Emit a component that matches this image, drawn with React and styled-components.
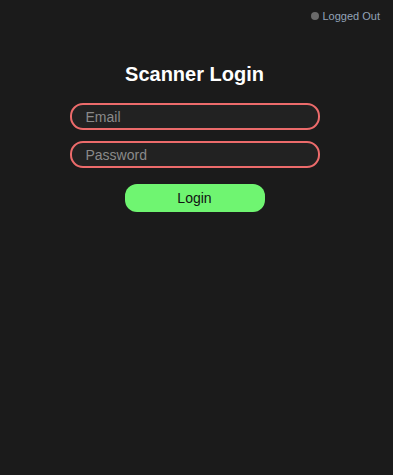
import styled, { createGlobalStyle } from "styled-components"

const Global = createGlobalStyle`
  html, body {
    margin: 0;
    padding: 0;
    background: #1b1b1b;
    font-family: "Liberation Sans", Arial, sans-serif;
  }
`

const Page = styled.div`
  width: 100vw;
  height: 100vh;
  background: #1b1b1b;
  display: flex;
  flex-direction: column;
`

const StatusBar = styled.div`
  display: flex;
  justify-content: flex-end;
  align-items: center;
  gap: 4px;
  padding: 10px 13px 0 0;
  font-size: 11px;
  color: #93a3b8;
`

const Dot = styled.span`
  width: 8px;
  height: 8px;
  border-radius: 50%;
  background: #6a6a6a;
`

const Form = styled.form`
  display: flex;
  flex-direction: column;
  align-items: center;
  margin-top: 41px;
  padding-right: 4px;
`

const Title = styled.h2`
  margin: 0 0 17px;
  color: #ffffff;
  font-size: 20px;
  font-weight: bold;
`

const Input = styled.input`
  box-sizing: border-box;
  width: 250px;
  height: 27px;
  margin-bottom: 11px;
  padding: 0 14px;
  border: 2px solid #ec6b6b;
  border-radius: 13px;
  background: #222222;
  color: #ddd;
  font-family: "Liberation Sans", Arial, sans-serif;
  font-size: 14px;
  outline: none;
  &::placeholder {
    color: #8a8a8a;
  }
`

const Button = styled.button`
  width: 140px;
  height: 28px;
  margin-top: 5px;
  border: none;
  border-radius: 12px;
  background: #6ff571;
  color: #111;
  font-family: "Liberation Sans", Arial, sans-serif;
  font-size: 14px;
  cursor: pointer;
`

const App = () => {
  return (
    <Page>
      <Global />
      <StatusBar>
        <Dot />
        <span>Logged Out</span>
      </StatusBar>
      <Form onSubmit={(e) => e.preventDefault()}>
        <Title>Scanner Login</Title>
        <Input placeholder="Email" />
        <Input type="password" placeholder="Password" />
        <Button>Login</Button>
      </Form>
    </Page>
  )
}

export default App
